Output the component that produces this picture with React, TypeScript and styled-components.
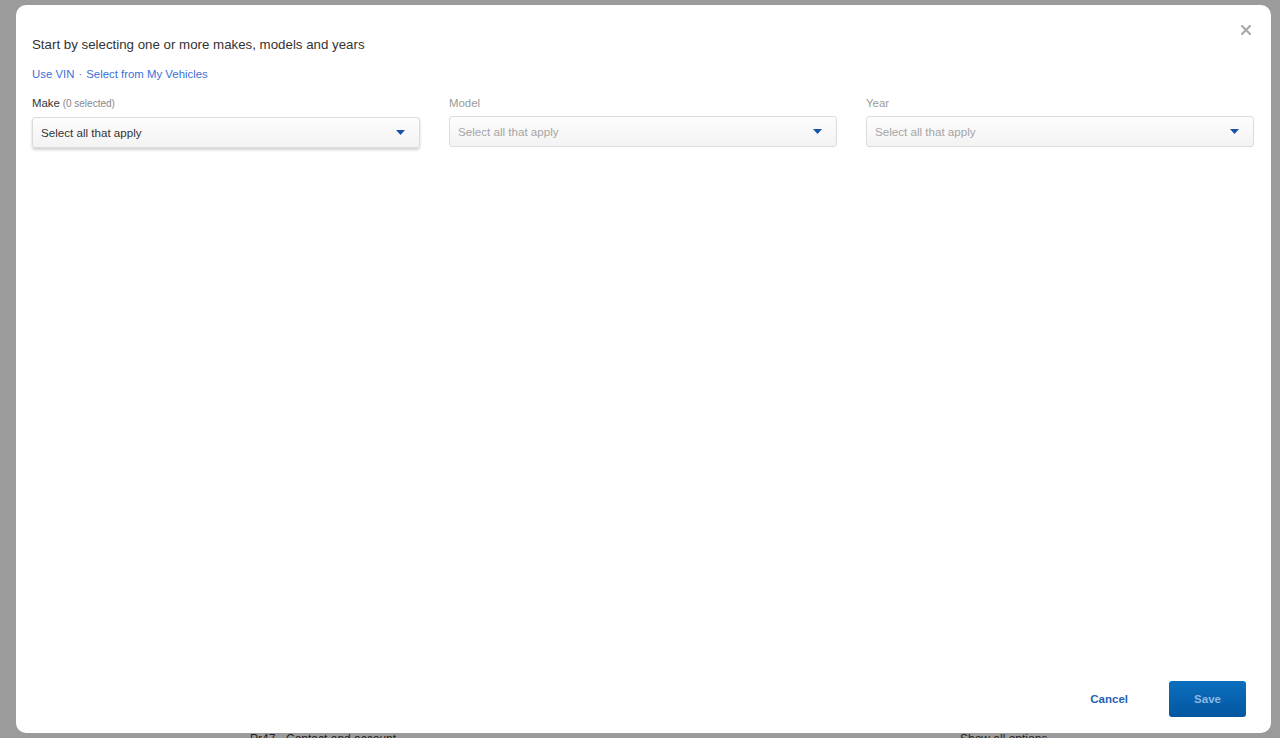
import styled, { createGlobalStyle } from 'styled-components';

const GlobalStyle = createGlobalStyle`
  html, body {
    margin: 0;
    padding: 0;
    height: 100%;
    overflow: hidden;
  }
  body {
    font-family: "Liberation Sans", Arial, sans-serif;
    background: #9b9b9b;
  }
`;

const COLOR = {
  text: '#333333',
  muted: '#9a9a9a',
  link: '#3a6fd9',
  brand: '#1f5fb5',
  caret: '#1852a8',
};

type Field = {
  label: string;
  hint?: string;
  enabled: boolean;
};

const fields: Field[] = [
  { label: 'Make', hint: '(0 selected)', enabled: true },
  { label: 'Model', enabled: false },
  { label: 'Year', enabled: false },
];

const Caret = () => (
  <svg width="9" height="5" viewBox="0 0 9 5">
    <path d="M0 0 L9 0 L4.5 5 Z" fill={COLOR.caret} />
  </svg>
);

const CloseIcon = () => (
  <svg width="10" height="10" viewBox="0 0 10 10">
    <path
      d="M1 1 L9 9 M9 1 L1 9"
      stroke="#aaaaaa"
      strokeWidth="2.2"
      strokeLinecap="square"
    />
  </svg>
);

const App = () => {
  return (
    <>
      <GlobalStyle />
      <Backdrop>
        <BehindRow>
          <BehindText $left={250}>Pr47 · Contact and account</BehindText>
          <BehindText $left={960}>Show all options</BehindText>
        </BehindRow>
      </Backdrop>
      <Overlay>
        <Modal>
          <CloseButton aria-label="Close">
            <CloseIcon />
          </CloseButton>
          <Body>
            <Title>Start by selecting one or more makes, models and years</Title>
            <Links>
              <Link>Use VIN</Link>
              <Dot>·</Dot>
              <Link>Select from My Vehicles</Link>
            </Links>
            <Fields>
              {fields.map((field) => (
                <FieldColumn key={field.label}>
                  <Label $enabled={field.enabled}>
                    {field.label}
                    {field.hint && <Hint> {field.hint}</Hint>}
                  </Label>
                  <Select $enabled={field.enabled}>
                    <span>Select all that apply</span>
                    <Caret />
                  </Select>
                </FieldColumn>
              ))}
            </Fields>
          </Body>
          <Footer>
            <CancelButton>Cancel</CancelButton>
            <SaveButton disabled>Save</SaveButton>
          </Footer>
        </Modal>
      </Overlay>
    </>
  );
};

export default App;

const Backdrop = styled.div`
  height: 738px;
  display: flex;
  flex-direction: column;
  justify-content: flex-end;
`;

const BehindRow = styled.div`
  position: relative;
  height: 6px;
  overflow: hidden;
`;

const BehindText = styled.span<{ $left: number }>`
  position: absolute;
  top: 0;
  left: ${({ $left }) => $left}px;
  font-size: 12px;
  line-height: 14px;
  color: #222222;
  white-space: nowrap;
`;

const Overlay = styled.div`
  position: fixed;
  inset: 0;
  padding: 5px 9px 5px 16px;
  display: flex;
`;

const Modal = styled.div`
  position: relative;
  flex: 1;
  background: #ffffff;
  border-radius: 10px;
  display: flex;
  flex-direction: column;
  padding: 32px 17px 16px 16px;
  box-sizing: border-box;
`;

const CloseButton = styled.button`
  position: absolute;
  top: 15px;
  right: 15px;
  width: 20px;
  height: 20px;
  padding: 0;
  border: none;
  background: none;
  display: flex;
  align-items: center;
  justify-content: center;
  cursor: pointer;
`;

const Body = styled.div`
  flex: 1;
  display: flex;
  flex-direction: column;
`;

const Title = styled.h2`
  margin: 0;
  font-size: 13.3px;
  line-height: 16px;
  font-weight: 400;
  color: ${COLOR.text};
`;

const Links = styled.div`
  margin-top: 14px;
  display: flex;
  align-items: center;
  gap: 4px;
  font-size: 11.4px;
  line-height: 14px;
`;

const Link = styled.a`
  color: ${COLOR.link};
  cursor: pointer;
`;

const Dot = styled.span`
  color: #777777;
`;

const Fields = styled.div`
  margin-top: 15px;
  display: grid;
  grid-template-columns: repeat(3, 1fr);
  column-gap: 29px;
`;

const FieldColumn = styled.div`
  display: flex;
  flex-direction: column;
  gap: 6px;
`;

const Label = styled.label<{ $enabled: boolean }>`
  font-size: 11.4px;
  line-height: 14px;
  color: ${({ $enabled }) => ($enabled ? COLOR.text : COLOR.muted)};
`;

const Hint = styled.span`
  font-size: 10px;
  color: #888888;
`;

const Select = styled.div<{ $enabled: boolean }>`
  height: 31px;
  box-sizing: border-box;
  display: flex;
  align-items: center;
  justify-content: space-between;
  padding: 0 14px 0 8px;
  border: 1px solid #dcdcdc;
  border-radius: 3px;
  background: linear-gradient(#fdfdfd, #f3f3f3);
  font-size: 11.6px;
  color: ${({ $enabled }) => ($enabled ? COLOR.text : '#a5a5a5')};
  box-shadow: ${({ $enabled }) =>
    $enabled ? '0 2px 3px rgba(0, 0, 0, 0.18)' : 'none'};
  cursor: ${({ $enabled }) => ($enabled ? 'pointer' : 'default')};
`;

const Footer = styled.div`
  display: flex;
  justify-content: flex-end;
  align-items: center;
  gap: 21px;
  padding-right: 8px;
`;

const CancelButton = styled.button`
  border: none;
  background: none;
  padding: 0 20px;
  height: 36px;
  font-family: inherit;
  font-size: 11.5px;
  font-weight: 700;
  color: ${COLOR.brand};
  cursor: pointer;
`;

const SaveButton = styled.button`
  width: 77px;
  height: 36px;
  border: none;
  border-radius: 3px;
  background: linear-gradient(#0b6fbf, #04569f);
  font-family: inherit;
  font-size: 11.5px;
  font-weight: 700;
  color: #8db8e2;
`;
